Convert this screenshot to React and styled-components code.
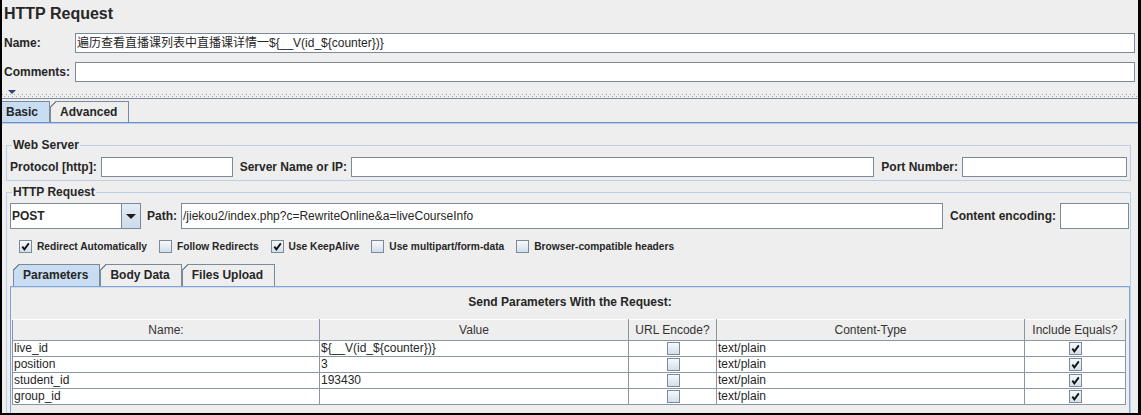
import React from "react";
import styled, { createGlobalStyle } from "styled-components";

const GlobalStyle = createGlobalStyle`
  html, body { margin: 0; padding: 0; background: #000; }
  body { font-family: "Liberation Sans", Arial, "Noto Sans CJK SC", sans-serif; }
`;

const Frame = styled.div`
  margin-left: 2px;
  width: 1136px;
  height: 413px;
  background: #eeeeee;
  overflow: hidden;
  color: #262626;
  font-size: 12px;
`;

const Title = styled.div`
  height: 33px;
  padding-left: 2px;
  font-size: 16px;
  font-weight: bold;
  line-height: 28px;
  box-sizing: border-box;
`;

const FormRow = styled.div`
  display: flex;
  align-items: center;
  height: 20px;
  padding: 0 3px 0 2px;
  margin-bottom: ${p => p.$gap || 0}px;
`;

const FormLabel = styled.div`
  width: 71px;
  flex: none;
  font-weight: bold;
  white-space: nowrap;
`;

const Field = styled.div`
  box-sizing: border-box;
  height: ${p => p.$h || 20}px;
  line-height: ${p => (p.$h || 20) - 2}px;
  border: 1px solid #7a8a99;
  background: #fff;
  padding-left: 1px;
  white-space: nowrap;
  overflow: hidden;
  flex: ${p => (p.$w ? "none" : "1")};
  width: ${p => (p.$w ? p.$w + "px" : "auto")};
  margin-right: ${p => p.$mr || 0}px;
  font-family: "Liberation Sans", Arial, "Noto Sans CJK SC", sans-serif;
`;

const Splitter = styled.div`
  height: 19px;
  box-sizing: border-box;
  padding-top: 8px;
`;

const GripMark = styled.div`
  margin-left: 6px;
  width: 0;
  height: 0;
  border-left: 4px solid transparent;
  border-right: 4px solid transparent;
  border-top: 4px solid #2f4270;
`;

const Dots = styled.div`
  height: 3px;
  background-image:
    repeating-linear-gradient(90deg, #97a3af 0 1px, transparent 1px 4px),
    repeating-linear-gradient(90deg, transparent 0 2px, #97a3af 2px 3px, transparent 3px 4px);
  background-size: 100% 1px, 100% 1px;
  background-position: 0 0, 0 2px;
  background-repeat: no-repeat;
`;

const SplitLine = styled.div`
  margin-top: 1px;
  height: 1px;
  background: #7a8a99;
`;

const TabStrip = styled.div`
  display: flex;
  align-items: flex-end;
  margin-left: ${p => p.$offset || 0}px;
  border-bottom: ${p => (p.$line ? "1px solid #6f8fc9" : "none")};
`;

const Tab = styled.div`
  position: relative;
  height: ${p => p.$h}px;
  box-sizing: border-box;
  padding: 0 11px 0 9px;
  border: 1px solid #7a8a99;
  border-bottom: none;
  background: ${p => (p.$active ? "#c8ddf2" : "#eeeeee")};
  font-weight: bold;
  line-height: ${p => p.$h - 1}px;
  white-space: nowrap;
  &::before {
    content: "";
    position: absolute;
    left: -1px;
    top: -1px;
    width: 7px;
    height: 7px;
    background: linear-gradient(
      to bottom right,
      #eeeeee calc(50% - 0.8px),
      #7a8a99 calc(50% - 0.8px),
      #7a8a99 calc(50% + 0.5px),
      transparent calc(50% + 0.5px)
    );
  }
`;

const TabBody = styled.div`
  border-top: 1px solid #b8cfe5;
`;

const Group = styled.fieldset`
  margin: ${p => p.$top}px 7px 0 4px;
  padding: ${p => p.$pad};
  border: 1px solid #b8cfe5;
  min-width: 0;
  height: ${p => (p.$fill ? "260px" : "auto")};
`;

const Legend = styled.legend`
  font-weight: bold;
  line-height: 14px;
  padding: 0 1px;
  margin-left: 2px;
`;

const Row = styled.div`
  display: flex;
  align-items: center;
  height: ${p => p.$h}px;
`;

const Label = styled.div`
  font-weight: bold;
  white-space: nowrap;
  margin-right: 4px;
`;

const ComboText = styled.div`
  box-sizing: border-box;
  width: 111px;
  height: 26px;
  line-height: 24px;
  border: 1px solid #7a8a99;
  border-right: none;
  background: #fff;
  padding-left: 1px;
  font-weight: bold;
`;

const ComboButton = styled.div`
  box-sizing: border-box;
  width: 20px;
  height: 26px;
  border: 1px solid #7a8a99;
  background: linear-gradient(#e4edf6, #cbdbea);
  display: flex;
  align-items: center;
  justify-content: center;
  margin-right: 6px;
  &::after {
    content: "";
    border-left: 5px solid transparent;
    border-right: 5px solid transparent;
    border-top: 5px solid #1e1e1e;
  }
`;

const CheckRow = styled.div`
  display: flex;
  align-items: center;
  height: 15px;
  margin-top: 10px;
  padding-left: 9px;
  gap: 12px;
`;

const CheckItem = styled.div`
  display: flex;
  align-items: center;
  gap: 5px;
  font-size: 10.2px;
  font-weight: bold;
  white-space: nowrap;
`;

const Box = styled.span`
  display: inline-flex;
  align-items: center;
  justify-content: center;
  vertical-align: middle;
  width: 13px;
  height: 13px;
  box-sizing: border-box;
  border: 1px solid #7a8a99;
  background: linear-gradient(#f6f9fc, #d3dfeb);
`;

const InnerTabs = styled.div`
  margin-top: 10px;
  padding-left: 3px;
`;

const Panel = styled.div`
  margin-right: -1px;
  height: 130px;
  border: 1px solid #86a3d1;
  border-bottom: none;
  box-shadow: inset 0 1px 0 #c8ddf2;
`;

const PanelTitle = styled.div`
  height: 32px;
  line-height: 30px;
  text-align: center;
  font-weight: bold;
`;

const Table = styled.table`
  margin-left: 1px;
  width: 1113px;
  border-collapse: collapse;
  table-layout: fixed;
  font-size: 12px;
`;

const Th = styled.th`
  height: 20px;
  padding: 0;
  font-weight: normal;
  text-align: center;
  background: #eeeeee;
  border: 1px solid #8a96a3;
  border-top: 1px solid #ffffff;
  color: #333;
`;

const Td = styled.td`
  height: 15px;
  padding: 0 0 0 1px;
  line-height: 15px;
  background: #fff;
  border: 1px solid #8a96a3;
  white-space: nowrap;
  overflow: hidden;
  text-align: ${p => (p.$center ? "center" : "left")};
`;

const Check = ({ checked }) => (
  <Box>
    {checked && (
      <svg width="9" height="9" viewBox="0 0 9 9">
        <path d="M1.3 4.6 L3.4 7.4 L7.8 1.4" fill="none" stroke="#111" strokeWidth="1.8" />
      </svg>
    )}
  </Box>
);

const params = [
  { name: "live_id", value: "${__V(id_${counter})}" },
  { name: "position", value: "3" },
  { name: "student_id", value: "193430" },
  { name: "group_id", value: "" },
];

const options = [
  { label: "Redirect Automatically", on: true },
  { label: "Follow Redirects", on: false },
  { label: "Use KeepAlive", on: true },
  { label: "Use multipart/form-data", on: false },
  { label: "Browser-compatible headers", on: false },
];

export default function App() {
  return (
    <>
      <GlobalStyle />
      <Frame>
        <Title>HTTP Request</Title>
        <FormRow $gap={9}>
          <FormLabel>Name:</FormLabel>
          <Field>遍历查看直播课列表中直播课详情一${"{"}__V(id_${"{"}counter{"}"}){"}"}</Field>
        </FormRow>
        <FormRow>
          <FormLabel>Comments:</FormLabel>
          <Field />
        </FormRow>
        <Splitter>
          <GripMark />
          <Dots />
          <SplitLine />
        </Splitter>
        <TabStrip $offset={-6} $line>
          <Tab $h={21} $active>Basic</Tab>
          <Tab $h={21}>Advanced</Tab>
        </TabStrip>
        <TabBody>
          <Group $top={14} $pad="5px 3px 3px 3px">
            <Legend>Web Server</Legend>
            <Row $h={20}>
              <Label>Protocol [http]:</Label>
              <Field $w={132} $mr={7} />
              <Label>Server Name or IP:</Label>
              <Field $mr={7} />
              <Label>Port Number:</Label>
              <Field $w={165} />
            </Row>
          </Group>
          <Group $top={4} $pad="4px 1px 0 3px" $fill>
            <Legend>HTTP Request</Legend>
            <Row $h={26}>
              <ComboText>POST</ComboText>
              <ComboButton />
              <Label>Path:</Label>
              <Field $h={26} $mr={7}>/jiekou2/index.php?c=RewriteOnline&amp;a=liveCourseInfo</Field>
              <Label>Content encoding:</Label>
              <Field $h={26} $w={69} />
            </Row>
            <CheckRow>
              {options.map(o => (
                <CheckItem key={o.label}>
                  <Check checked={o.on} />
                  {o.label}
                </CheckItem>
              ))}
            </CheckRow>
            <InnerTabs>
              <TabStrip>
                <Tab $h={22} $active>Parameters</Tab>
                <Tab $h={22}>Body Data</Tab>
                <Tab $h={22}>Files Upload</Tab>
              </TabStrip>
            </InnerTabs>
            <Panel>
              <PanelTitle>Send Parameters With the Request:</PanelTitle>
              <Table>
                <colgroup>
                  <col style={{ width: 307 }} />
                  <col style={{ width: 309 }} />
                  <col style={{ width: 88 }} />
                  <col style={{ width: 308 }} />
                  <col style={{ width: 101 }} />
                </colgroup>
                <thead>
                  <tr>
                    <Th>Name:</Th>
                    <Th>Value</Th>
                    <Th>URL Encode?</Th>
                    <Th>Content-Type</Th>
                    <Th>Include Equals?</Th>
                  </tr>
                </thead>
                <tbody>
                  {params.map(p => (
                    <tr key={p.name}>
                      <Td>{p.name}</Td>
                      <Td>{p.value}</Td>
                      <Td $center><Check /></Td>
                      <Td>text/plain</Td>
                      <Td $center><Check checked /></Td>
                    </tr>
                  ))}
                </tbody>
              </Table>
            </Panel>
          </Group>
        </TabBody>
      </Frame>
    </>
  );
}
